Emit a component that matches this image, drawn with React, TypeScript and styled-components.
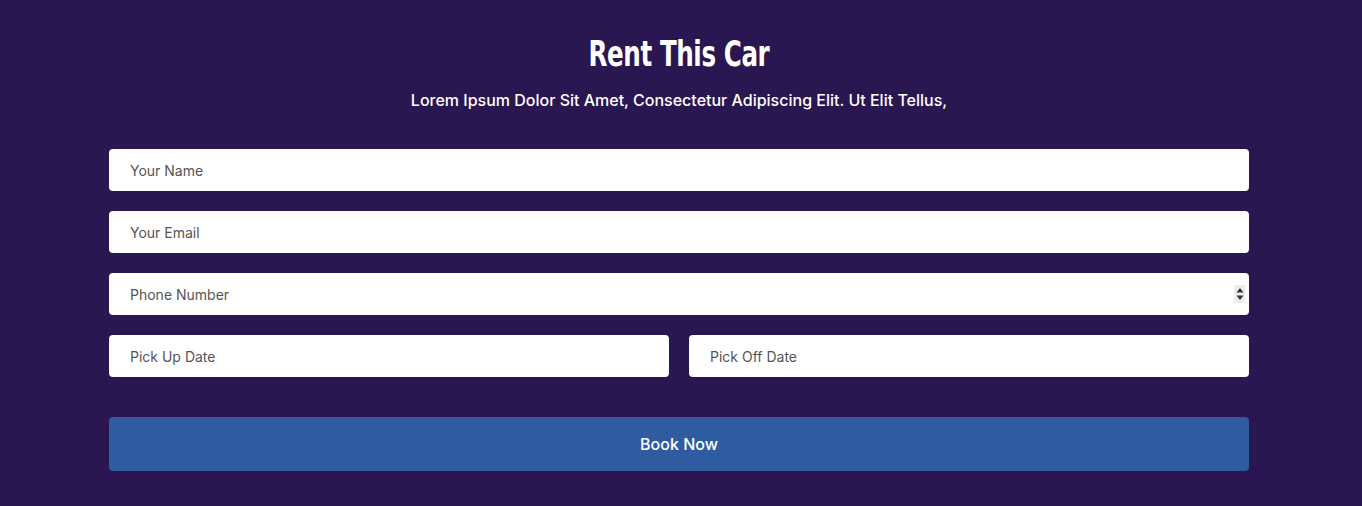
import React from 'react'
import styled, { createGlobalStyle } from 'styled-components'

const GlobalStyle = createGlobalStyle`
  html, body {
    margin: 0;
    padding: 0;
    background: #2a1650;
  }
  body {
    font-family: Inter, "Noto Sans", sans-serif;
  }
`

const Section = styled.section`
  height: 506px;
  box-sizing: border-box;
  padding: 30px 113px 0 109px;
  background: #2a1650;
`

const Title = styled.h2`
  margin: 0;
  text-align: center;
  color: #fff;
  font-family: "DejaVu Sans Condensed", "DejaVu Sans", sans-serif;
  font-weight: 700;
  font-size: 35px;
  line-height: 48px;
  letter-spacing: -0.5px;
`

// the reference heading uses a narrow display face; squeeze the bold one
const TitleText = styled.span`
  display: inline-block;
  transform: scaleX(0.78);
`

const Subtitle = styled.p`
  margin: 10px 0 0;
  text-align: center;
  color: #fff;
  font-family: Inter, "Noto Sans", sans-serif;
  font-weight: 500;
  font-size: 16px;
  line-height: 24px;
`

const Form = styled.form`
  margin-top: 37px;
  display: flex;
  flex-direction: column;
  gap: 20px;
`

const Row = styled.div`
  display: grid;
  grid-template-columns: 1fr 1fr;
  gap: 20px;
`

const FieldWrap = styled.div`
  position: relative;
`

const Input = styled.input`
  display: block;
  width: 100%;
  box-sizing: border-box;
  height: 42px;
  border: none;
  border-radius: 4px;
  background: #fff;
  padding: 0 21px;
  font-family: Inter, "Noto Sans", sans-serif;
  font-size: 14px;
  color: #333;
  outline: none;
  appearance: textfield;
  &::placeholder {
    color: #555;
  }
  &::-webkit-inner-spin-button,
  &::-webkit-outer-spin-button {
    -webkit-appearance: none;
    margin: 0;
  }
`

const Spinner = styled.span`
  position: absolute;
  right: 4px;
  top: 12px;
  width: 11px;
  height: 18px;
  display: flex;
  align-items: center;
  justify-content: center;
  background: #ececec;
`

const Button = styled.button`
  margin-top: 20px;
  height: 54px;
  border: none;
  border-radius: 4px;
  background: #2f5ca0;
  color: #fff;
  font-family: Inter, "Noto Sans", sans-serif;
  font-size: 16px;
  font-weight: 500;
  cursor: pointer;
`

const App: React.FC = () => {
  return (
    <>
      <GlobalStyle />
      <Section>
        <Title>
          <TitleText>Rent This Car</TitleText>
        </Title>
        <Subtitle>
          Lorem Ipsum Dolor Sit Amet, Consectetur Adipiscing Elit. Ut Elit Tellus,
        </Subtitle>
        <Form onSubmit={e => e.preventDefault()}>
          <Input type="text" placeholder="Your Name" />
          <Input type="email" placeholder="Your Email" />
          <FieldWrap>
            <Input type="number" placeholder="Phone Number" />
            <Spinner>
              <svg width="8" height="14" viewBox="0 0 8 14">
                <path d="M4 1 L7.5 5.5 H0.5 Z" fill="#333" />
                <path d="M4 13 L7.5 8.5 H0.5 Z" fill="#333" />
              </svg>
            </Spinner>
          </FieldWrap>
          <Row>
            <Input type="text" placeholder="Pick Up Date" />
            <Input type="text" placeholder="Pick Off Date" />
          </Row>
          <Button type="submit">Book Now</Button>
        </Form>
      </Section>
    </>
  )
}

export default App
